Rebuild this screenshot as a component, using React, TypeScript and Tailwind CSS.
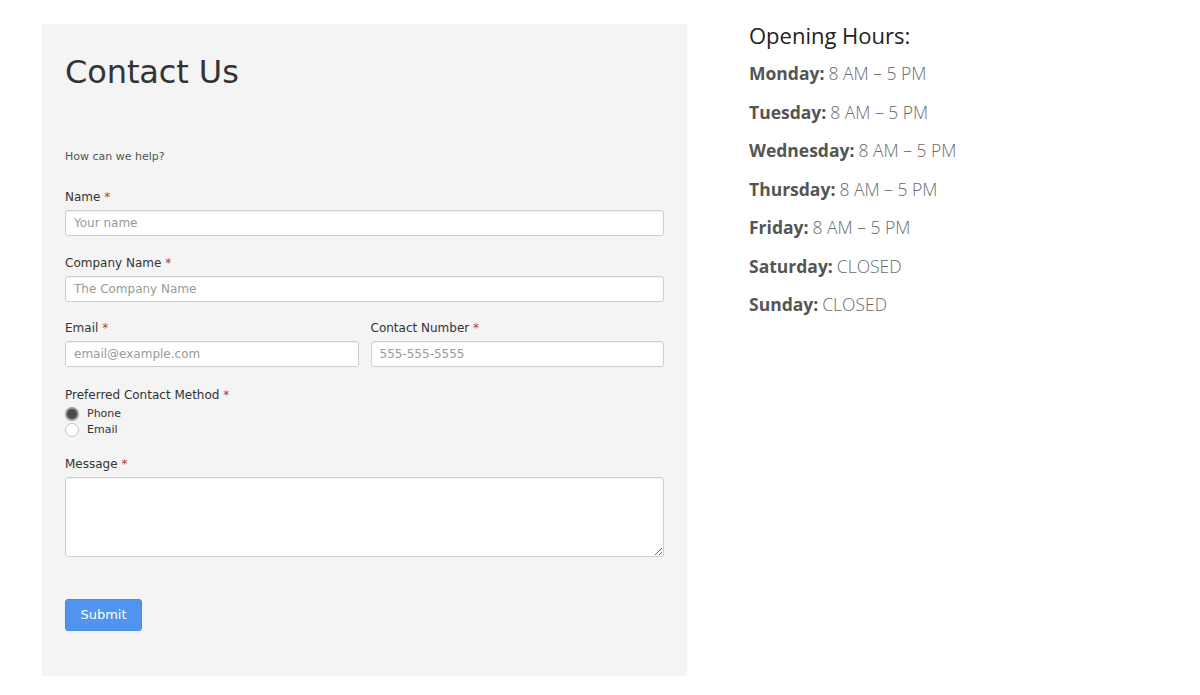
import { FC } from "react";

// label with the red star
const Label: FC<{ text: string }> = ({ text }) => (
  <div className="h-4 leading-4 text-[12px] text-[#333]">
    {text} <span className="text-[#c0392b]">*</span>
  </div>
);

const inputCls =
  "mt-[5px] block w-full h-[26px] px-[8px] bg-white border border-[#cfcfcf] rounded-[3px] text-[12px] text-[#333] placeholder:text-[#9a9a9a] shadow-[inset_0_1px_1px_rgba(0,0,0,0.06)] outline-none";

const Radio: FC<{ label: string; checked?: boolean }> = ({ label, checked }) => (
  <label className="flex items-center h-4 gap-[8px] text-[11px] text-[#333]">
    {checked ? (
      <span className="w-[14px] h-[14px] rounded-full bg-[#9b9b9b] flex items-center justify-center">
        <span className="w-[10px] h-[10px] rounded-full bg-[#4a4a4a]" />
      </span>
    ) : (
      <span className="w-[14px] h-[14px] rounded-full bg-white border border-[#c4c4c4]" />
    )}
    {label}
  </label>
);

const hours = [
  { day: "Monday", time: "8 AM – 5 PM" },
  { day: "Tuesday", time: "8 AM – 5 PM" },
  { day: "Wednesday", time: "8 AM – 5 PM" },
  { day: "Thursday", time: "8 AM – 5 PM" },
  { day: "Friday", time: "8 AM – 5 PM" },
  { day: "Saturday", time: "CLOSED" },
  { day: "Sunday", time: "CLOSED" },
];

export default function App() {
  return (
    <div className="w-[1200px] h-[695px] bg-white flex">
      {/* form panel */}
      <div
        className="ml-[42px] mt-[24px] w-[645px] h-[652px] bg-[#f4f4f4] pt-[28px] px-[23px]"
        style={{ fontFamily: '"DejaVu Sans", Verdana, sans-serif' }}
      >
        <h1 className="h-10 leading-10 text-[32px] text-[#333] tracking-[-0.1px]">Contact Us</h1>
        <p className="mt-[57px] h-4 leading-4 text-[11px] text-[#555]">How can we help?</p>

        <div className="mt-[24px]">
          <Label text="Name" />
          <input className={inputCls} placeholder="Your name" />
        </div>

        <div className="mt-[19px]">
          <Label text="Company Name" />
          <input className={inputCls} placeholder="The Company Name" />
        </div>

        <div className="mt-[18px] grid grid-cols-2 gap-x-[12px]">
          <div>
            <Label text="Email" />
            <input className={inputCls} placeholder="email@example.com" />
          </div>
          <div>
            <Label text="Contact Number" />
            <input className={inputCls} placeholder="555-555-5555" />
          </div>
        </div>

        <div className="mt-[20px]">
          <Label text="Preferred Contact Method" />
          <div className="mt-[3px]">
            <Radio label="Phone" checked />
            <Radio label="Email" />
          </div>
        </div>

        <div className="mt-[18px]">
          <Label text="Message" />
          <textarea className={`${inputCls} h-[80px] py-1`} />
        </div>

        <button className="mt-[42px] w-[77px] h-[32px] rounded-[3px] bg-[#4f95f0] border border-[#4a8ce4] text-white text-[13px]">
          Submit
        </button>
      </div>

      {/* opening hours */}
      <div className="ml-[62px] pt-[20px]" style={{ fontFamily: '"Open Sans", sans-serif' }}>
        <h2 className="h-[30px] leading-[30px] text-[22px] text-[#222]">Opening Hours:</h2>
        <div className="mt-[4px]">
          {hours.map((h) => (
            <div key={h.day} className="h-[38.5px] flex items-center text-[17.5px]">
              <span className="font-bold text-[#555]">{h.day}:</span>
              <span className="ml-[4px] font-light text-[#6a6a6a]">{h.time}</span>
            </div>
          ))}
        </div>
      </div>
    </div>
  );
}
